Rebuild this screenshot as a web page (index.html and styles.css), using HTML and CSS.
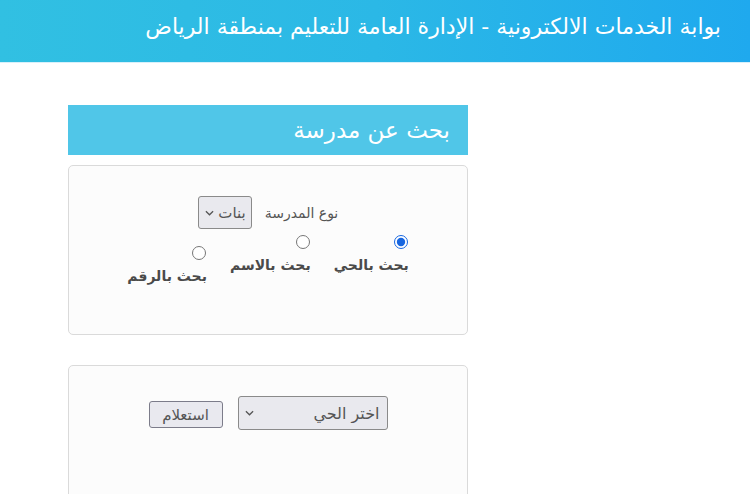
FILE: index.html
```html
<!DOCTYPE html>
<html lang="ar" dir="rtl">
<head>
<meta charset="utf-8">
<title>بوابة الخدمات الالكترونية</title>
<link rel="stylesheet" href="styles.css">
</head>
<body>
<header class="topbar">
  <h1 class="site-title">بوابة الخدمات الالكترونية - الإدارة العامة للتعليم بمنطقة الرياض</h1>
</header>
<main class="content">
  <section class="panel">
    <h2 class="panel-heading">بحث عن مدرسة</h2>
    <div class="card card-options">
      <div class="type-row">
        <label class="type-label" for="stype">نوع المدرسة</label>
        <span class="select-wrap small">
          <select id="stype" class="select"><option>بنات</option></select>
          <svg class="chev" viewBox="0 0 10 6" width="9" height="6"><path d="M1 1l4 4 4-4" fill="none" stroke="#555" stroke-width="1.4"/></svg>
        </span>
      </div>
      <div class="radio-row">
        <label class="radio-item"><input type="radio" name="mode" checked><span class="radio-text">بحث بالحي</span></label>
        <label class="radio-item"><input type="radio" name="mode"><span class="radio-text">بحث بالاسم</span></label>
        <label class="radio-item low"><input type="radio" name="mode"><span class="radio-text">بحث بالرقم</span></label>
      </div>
    </div>
    <div class="card card-query">
      <div class="query-row">
        <span class="select-wrap wide">
          <select class="select"><option>اختر الحي</option></select>
          <svg class="chev" viewBox="0 0 10 6" width="9" height="6"><path d="M1 1l4 4 4-4" fill="none" stroke="#555" stroke-width="1.4"/></svg>
        </span>
        <button class="btn" type="button">استعلام</button>
      </div>
    </div>
  </section>
</main>
</body>
</html>
```
FILE: styles.css
```css
* { box-sizing: border-box; }
html, body { margin: 0; padding: 0; background: #ffffff; }
body {
  font-family: "DejaVu Sans", "Noto Sans", sans-serif;
  color: #555;
}
.topbar {
  height: 63px;
  background: linear-gradient(90deg, #31c0e2 0%, #2bb8e6 50%, #1fa9ee 100%);
  border-bottom: 1px solid #d8f0fa;
  display: flex;
  align-items: flex-start;
  padding: 12px 29px 0 0;
}
.site-title {
  margin: 0;
  font-size: 22px;
  font-weight: normal;
  color: #ffffff;
  line-height: 30px;
}
.content {
  padding: 42px 0 0 0;
}
.panel {
  width: 400px;
  margin-left: 68px;
  margin-right: auto;
}
.panel-heading {
  margin: 0;
  height: 50px;
  background: #50c6e8;
  color: #ffffff;
  font-size: 23px;
  font-weight: normal;
  line-height: 50px;
  padding-right: 18px;
}
.card {
  margin-top: 10px;
  border: 1px solid #dadada;
  border-radius: 5px;
  background: #fcfcfc;
}
.card-options {
  height: 170px;
  padding-top: 30px;
}
.card-query {
  margin-top: 30px;
  height: 160px;
  padding-top: 30px;
}
.type-row {
  display: flex;
  justify-content: center;
  align-items: center;
  gap: 13px;
}
.type-label {
  font-size: 14px;
  color: #555;
}
.select-wrap { position: relative; display: inline-block; }
.select {
  -webkit-appearance: none;
  appearance: none;
  font-family: inherit;
  color: #555;
  background: #e9e9ee;
  border: 1px solid #8a8a8a;
  border-radius: 3px;
  direction: rtl;
  margin: 0;
}
.small .select {
  width: 54px;
  height: 33px;
  font-size: 15px;
  padding: 0 5px 0 18px;
}
.wide .select {
  width: 150px;
  height: 34px;
  font-size: 16px;
  padding: 0 7px 0 24px;
}
.chev {
  position: absolute;
  top: 50%;
  margin-top: -3px;
  left: 7px;
  pointer-events: none;
}
.wide .chev { left: 7px; }
.radio-row {
  display: flex;
  justify-content: center;
  align-items: flex-start;
  gap: 23px;
  margin-top: 6px;
}
.radio-item {
  display: flex;
  flex-direction: column;
  align-items: flex-start;
  font-weight: bold;
  font-size: 14px;
  color: #4a4a4a;
}
.radio-item input {
  margin: 0 1px 6px 0;
  width: 14px;
  height: 14px;
  accent-color: #1766e0;
}
.radio-item.low { margin-top: 11px; }
.radio-text { line-height: 20px; }
.query-row {
  display: flex;
  justify-content: center;
  align-items: center;
  gap: 15px;
}
.btn {
  font-family: inherit;
  font-size: 15px;
  color: #555;
  background: #e9e9ef;
  border: 1px solid #7c7c8a;
  border-radius: 3px;
  width: 74px;
  height: 27px;
  padding: 0;
  margin-top: 3px;
}
```
